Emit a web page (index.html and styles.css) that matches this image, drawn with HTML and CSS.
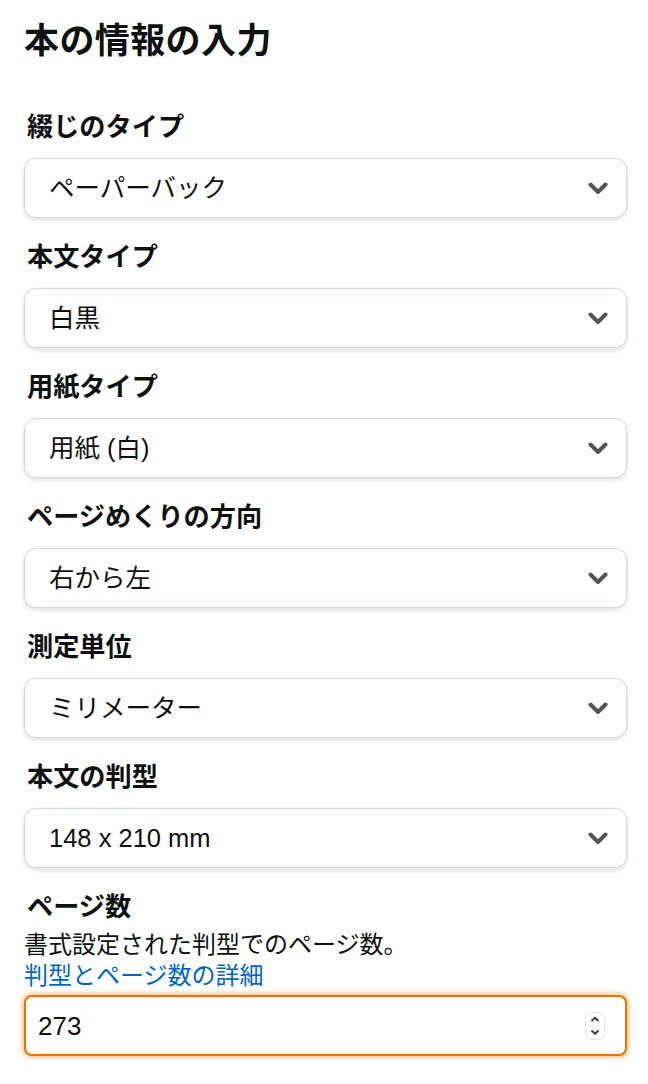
FILE: index.html
```html
<!DOCTYPE html>
<html lang="ja">
<head>
<meta charset="utf-8">
<title>本の情報の入力</title>
<link rel="stylesheet" href="styles.css">
</head>
<body>
<main class="page">
  <h1 class="title">本の情報の入力</h1>

  <div class="field">
    <div class="label">綴じのタイプ</div>
    <div class="select"><span class="select-text">ペーパーバック</span><svg class="chev" viewBox="0 0 20 13"><polyline points="2.5,2.5 10,10 17.5,2.5"/></svg></div>
  </div>

  <div class="field">
    <div class="label">本文タイプ</div>
    <div class="select"><span class="select-text">白黒</span><svg class="chev" viewBox="0 0 20 13"><polyline points="2.5,2.5 10,10 17.5,2.5"/></svg></div>
  </div>

  <div class="field">
    <div class="label">用紙タイプ</div>
    <div class="select"><span class="select-text">用紙 (白)</span><svg class="chev" viewBox="0 0 20 13"><polyline points="2.5,2.5 10,10 17.5,2.5"/></svg></div>
  </div>

  <div class="field">
    <div class="label">ページめくりの方向</div>
    <div class="select"><span class="select-text">右から左</span><svg class="chev" viewBox="0 0 20 13"><polyline points="2.5,2.5 10,10 17.5,2.5"/></svg></div>
  </div>

  <div class="field">
    <div class="label">測定単位</div>
    <div class="select"><span class="select-text">ミリメーター</span><svg class="chev" viewBox="0 0 20 13"><polyline points="2.5,2.5 10,10 17.5,2.5"/></svg></div>
  </div>

  <div class="field">
    <div class="label">本文の判型</div>
    <div class="select"><span class="select-text">148 x 210 mm</span><svg class="chev" viewBox="0 0 20 13"><polyline points="2.5,2.5 10,10 17.5,2.5"/></svg></div>
  </div>

  <div class="field">
    <div class="label">ページ数</div>
    <div class="desc">書式設定された判型でのページ数。</div>
    <a class="link" href="#">判型とページ数の詳細</a>
    <div class="number">
      <span class="number-text">273</span>
      <span class="spinner">
        <svg viewBox="0 0 20 28">
          <rect x="0.5" y="0.5" width="19" height="27" rx="6" fill="#fff" stroke="#e3e3e3"/>
          <line x1="2" y1="14" x2="18" y2="14" stroke="#e6e6e6"/>
          <polyline points="6.5,9 10,5.8 13.5,9" fill="none" stroke="#333" stroke-width="1.8"/>
          <polyline points="6.5,18.5 10,21.7 13.5,18.5" fill="none" stroke="#333" stroke-width="1.8"/>
        </svg>
      </span>
    </div>
  </div>
</main>
</body>
</html>
```

FILE: styles.css
```css
html, body {
  margin: 0;
  padding: 0;
  background: #fff;
}

body {
  font-family: "Liberation Sans", "Noto Sans CJK JP", sans-serif;
  color: #0f1111;
}

.page {
  padding: 19px 21px 0 24px;
}

.title {
  margin: 0 0 49px 0;
  font-size: 35px;
  line-height: 44px;
  font-weight: 700;
  letter-spacing: 0.4px;
}

.field {
  margin-bottom: 24px;
  display: flex;
  flex-direction: column;
}

.label {
  font-size: 26.2px;
  line-height: 30px;
  font-weight: 700;
  padding-left: 3px;
  margin-bottom: 16px;
}

.select {
  box-sizing: border-box;
  height: 60px;
  border: 1px solid #d5d9d9;
  border-radius: 12px;
  background: #fff;
  box-shadow: 0 2px 5px rgba(15, 17, 17, 0.15);
  display: flex;
  align-items: center;
  justify-content: space-between;
  padding: 0 18px 0 24px;
}

.select-text {
  font-size: 25.5px;
  line-height: 30px;
}

.chev {
  width: 20px;
  height: 13px;
  fill: none;
  stroke: #555;
  stroke-width: 4;
  stroke-linecap: round;
  stroke-linejoin: round;
}

.field:last-child .label {
  margin-bottom: 0;
}

.desc {
  font-size: 24px;
  line-height: 31px;
  margin-top: 7px;
}

.link {
  font-size: 24px;
  line-height: 31px;
  color: #0066c0;
  text-decoration: none;
}

.number {
  box-sizing: border-box;
  margin-top: 4px;
  height: 61px;
  border: 2px solid #e77600;
  border-radius: 8px;
  background: #fff;
  box-shadow: 0 0 4px 2px rgba(228, 121, 17, 0.45);
  display: flex;
  align-items: center;
  justify-content: space-between;
  padding: 0 20px 0 12px;
}

.number-text {
  font-size: 26px;
  line-height: 30px;
}

.spinner {
  display: flex;
  width: 20px;
  height: 28px;
}

.spinner svg {
  width: 20px;
  height: 28px;
}
```
